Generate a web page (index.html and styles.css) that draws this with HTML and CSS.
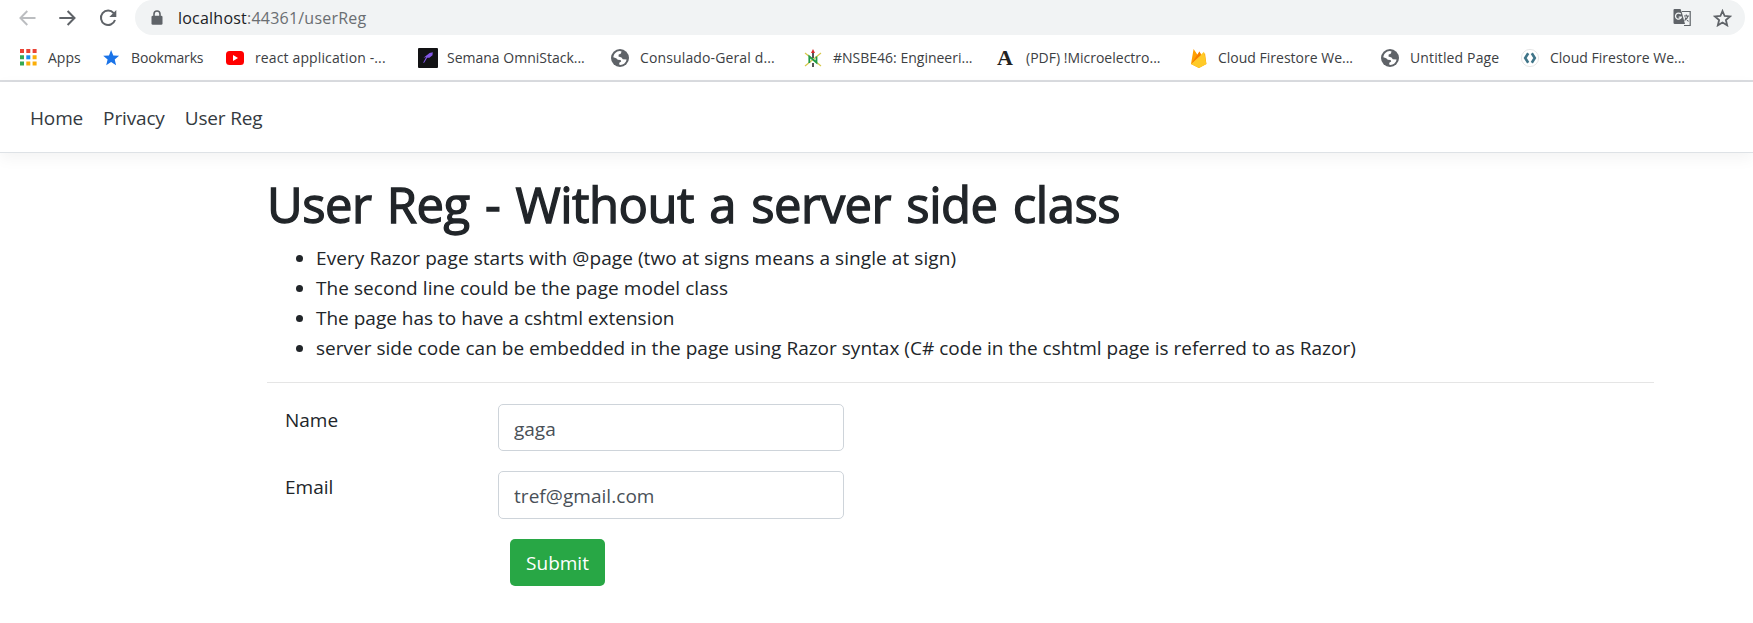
FILE: index.html
```html
<!DOCTYPE html>
<html lang="en">
<head>
<meta charset="utf-8">
<title>User Reg</title>
<link rel="stylesheet" href="styles.css">
</head>
<body>
<svg class="defs" width="0" height="0">
  <symbol id="globe" viewBox="0 0 18 18"><circle cx="9" cy="9" r="9" fill="#5f6368"/><path d="M2.3 8.2C2.8 5 5.2 2.3 8.8 2.1L10.6 2.5 9.7 4.8 7.7 5.6 7.5 7.6 10.5 8.4 11.8 10.2 15.6 10.4C15 13.5 12.5 15.8 9.3 15.9L8.2 15.5 8.3 13.7 10.2 12.4 9.6 11 6.8 10.7 5.2 9.2Z" fill="#fff"/></symbol>
</svg>
<header class="browser">
  <div class="toolbar">
    <div class="controls">
      <svg width="17" height="16" viewBox="0 0 17 16" fill="none" stroke="#bbbdc0" stroke-width="1.9"><path d="M16.5 8H1.8M8.3 1L1.4 8l6.9 7"/></svg>
      <svg width="17" height="16" viewBox="0 0 17 16" fill="none" stroke="#5f6368" stroke-width="2"><path d="M.3 8h14.8M8.6 1l6.9 7-6.9 7"/></svg>
      <svg width="18" height="18" viewBox="0 0 18 18"><path d="M14.7 4.2A7.2 7.2 0 1 0 16 11" fill="none" stroke="#5f6368" stroke-width="2"/><path d="M17.3 1v7h-7z" fill="#5f6368"/></svg>
    </div>
    <div class="omnibox">
      <svg width="12" height="16" viewBox="0 0 12 16"><path d="M3 6.5V4a3 3 0 0 1 6 0v2.5" fill="none" stroke="#5f6368" stroke-width="1.6"/><rect x=".5" y="5.8" width="11" height="9" rx="1.3" fill="#5f6368"/></svg>
      <span class="url"><span class="host">localhost</span><span class="path">:44361/userReg</span></span>
      <svg class="translate" width="19" height="19" viewBox="0 0 19 19"><path d="M9 3.5h8.2v14H11" fill="none" stroke="#5f6368" stroke-width="1.2"/><path d="M1.5 1h6l1.3 3.3L12 16H1.8A1.3 1.3 0 0 1 .5 14.7V2a1 1 0 0 1 1-1z" fill="#5f6368"/><path d="M7.8 6.2a3 3 0 1 0 .5 3H5.7" fill="none" stroke="#f1f3f4" stroke-width="1.3"/><path d="M11 8h5M13.3 6.5V8M15 8c-.5 2-1.8 3.6-3.5 4.5M12 9.5l3.5 4" fill="none" stroke="#5f6368" stroke-width="1.1"/></svg>
      <svg width="19" height="18" viewBox="0 0 19 18"><path d="M9.5 2l2.1 5 5.4.45-4.1 3.55 1.25 5.3-4.65-2.85-4.65 2.85L6.1 11 2 7.45 7.4 7z" fill="none" stroke="#5f6368" stroke-width="1.8"/></svg>
    </div>
  </div>
  <nav class="bookmarks">
    <a class="apps"><svg viewBox="0 0 20 20"><path d="M0 1h4v4H0zM6.3 1h4v4h-4zM12.6 1h4v4h-4z" fill="#ea4335"/><path d="M0 7.3h4v4H0zM0 13.6h4v4H0z" fill="#34a853"/><path d="M6.3 7.3h4v4h-4z" fill="#1a8cf0"/><path d="M12.6 7.3h4v4h-4zM6.3 13.6h4v4h-4zM12.6 13.6h4v4h-4z" fill="#fbae08"/></svg><span>Apps</span></a>
    <a class="tight"><svg viewBox="0 0 20 20"><path d="M8.1 2l2.2 5.4 5.8.4-4.4 3.7 1.4 5.7-5-3.1-4.9 3.1 1.4-5.7L.2 7.8 6 7.4z" fill="#1a73e8"/></svg><span>Bookmarks</span></a>
    <a class="wide"><svg viewBox="0 0 20 20"><rect y="3" width="18" height="14" rx="3.5" fill="#f00"/><path d="M7 7l5 3-5 3z" fill="#fff"/></svg><span>react application -...</span></a>
    <a><svg viewBox="0 0 20 20"><rect width="20" height="20" rx="1" fill="#121214"/><path d="M14.8 4.2l-.3 3-3.1 2.6H9.2L6 15l-.8-.4 3-5.6L5.5 9.7 8.4 7.4 11.6 5z" fill="#8257e5"/></svg><span>Semana OmniStack...</span></a>
    <a class="wide"><svg viewBox="0 0 20 20"><use href="#globe" y="1" width="18" height="18"/></svg><span>Consulado-Geral d...</span></a>
    <a><svg viewBox="0 0 20 20"><path d="M1 5l16 13M17 5L1 18" stroke="#d7c84b" stroke-width="1.2"/><path d="M5.3 15V8.5l7.2 6V8.5" fill="none" stroke="#219b48" stroke-width="1.8"/><path d="M9 5v5M9 15v4" stroke="#555" stroke-width="2"/><path d="M7 5l2-4 2 4z" fill="#d52b2b"/></svg><span>#NSBE46: Engineeri...</span></a>
    <a><span class="letter">A</span><span>(PDF) !Microelectro...</span></a>
    <a class="fire"><svg viewBox="0 0 20 20"><path d="M1 16L3.6 1l4 6 1.8-3.5L12 8l3-3 1.4 11-7.5 4z" fill="#ffa000"/><path d="M1 16L14 3.8 16.4 16 9 20z" fill="#ffca28"/><path d="M1 16L9.5 3.5 11 7z" fill="#f57c00"/></svg><span>Cloud Firestore We...</span></a>
    <a class="wide"><svg viewBox="0 0 20 20"><use href="#globe" y="1" width="18" height="18"/></svg><span>Untitled Page</span></a>
    <a><svg viewBox="0 0 20 20"><circle cx="9" cy="10" r="8.6" fill="#fff" stroke="#e6e6e6"/><path d="M7.2 5.2L4.2 10l3 4.8M10.8 5.2l3 4.8-3 4.8" fill="none" stroke="#3f7488" stroke-width="2.6"/></svg><span>Cloud Firestore We...</span></a>
  </nav>
</header>
<nav class="site-nav"><a>Home</a><a>Privacy</a><a>User Reg</a></nav>
<main class="container">
  <h1>User Reg - Without a server side class</h1>
  <ul>
    <li class="first">Every Razor page starts with @page (two at signs means a single at sign)</li>
    <li class="second">The second line could be the page model class</li>
    <li>The page has to have a cshtml extension</li>
    <li class="last">server side code can be embedded in the page using Razor syntax (C# code in the cshtml page is referred to as Razor)</li>
  </ul>
  <form class="form">
    <label for="name">Name</label><input id="name" value="gaga">
    <label for="email">Email</label><input id="email" value="tref@gmail.com">
    <button type="button">Submit</button>
  </form>
</main>
</body>
</html>
```
FILE: styles.css
```css
* { box-sizing: border-box; }
body { margin: 0; background: #fff; color: #212529; font: 19px/30px "Open Sans", sans-serif; }
.defs { display: block; }
.browser { height: 82px; border-bottom: 2px solid #dadce0; }
.toolbar { display: flex; height: 35px; padding-right: 8px; }
.controls { display: flex; align-items: center; gap: 23px; width: 135px; padding-left: 19px; }
.omnibox { flex: 1; display: flex; align-items: center; padding: 0 13px 0 16px; border-radius: 18px; background: #f1f3f4; }
.url { margin-left: 15px; font-size: 16px; letter-spacing: .22px; }
.host { color: #202124; }
.path { color: #6a6e72; }
.translate { margin-left: auto; margin-right: 21px; }
.bookmarks { display: grid; grid-template-columns: 83px 123px 192px 193px 193px 193px 193px 191px 140px 1fr; height: 45px; padding: 1px 0 0 20px; color: #3c4043; font-size: 14px; align-items: center; }
.bookmarks a { display: flex; align-items: center; gap: 9px; white-space: nowrap; }
.bookmarks .apps, .bookmarks .fire { gap: 8px; }
.bookmarks .tight { letter-spacing: -.15px; gap: 8px; }
.bookmarks .wide { letter-spacing: .13px; }
.bookmarks svg, .letter { width: 20px; height: 20px; flex: none; }
.letter { font: bold 22px/20px "Liberation Serif", serif; color: #222; }
.site-nav { display: flex; gap: 20px; height: 71px; padding: 21px 30px 19px; border-bottom: 1px solid #dee2e6; box-shadow: 0 5px 15px rgba(0,0,0,.05); color: #343a40; letter-spacing: -.15px; }
.container { width: 1387px; margin-left: 267px; padding-top: 21px; }
h1 { margin: 0 0 9px; font-size: 49px; line-height: 60px; font-weight: 400; white-space: nowrap; letter-spacing: -.5px; word-spacing: 3px; -webkit-text-stroke: 1.3px #212529; }
ul { margin: 0; padding: 0 0 19px 49px; }
li { white-space: nowrap; }
.first { letter-spacing: .075px; }
.second { letter-spacing: .055px; }
.last { letter-spacing: .015px; }
.form { display: grid; grid-template-columns: 213px 346px; row-gap: 20px; padding: 21px 0 0 18px; border-top: 1px solid #e5e5e5; }
label { padding-top: 1px; }
input { height: 47px; padding: 2px 15px 0; border: 1px solid #ced4da; border-radius: 5px; color: #495057; font: inherit; background: #fff; }
#email { height: 48px; padding-top: 1px; letter-spacing: .05px; }
button { grid-column: 2; justify-self: start; width: 95px; height: 47px; margin-left: 12px; padding: 0; border: 0; border-radius: 5px; background: #28a745; color: #fff; font: inherit; }
```
